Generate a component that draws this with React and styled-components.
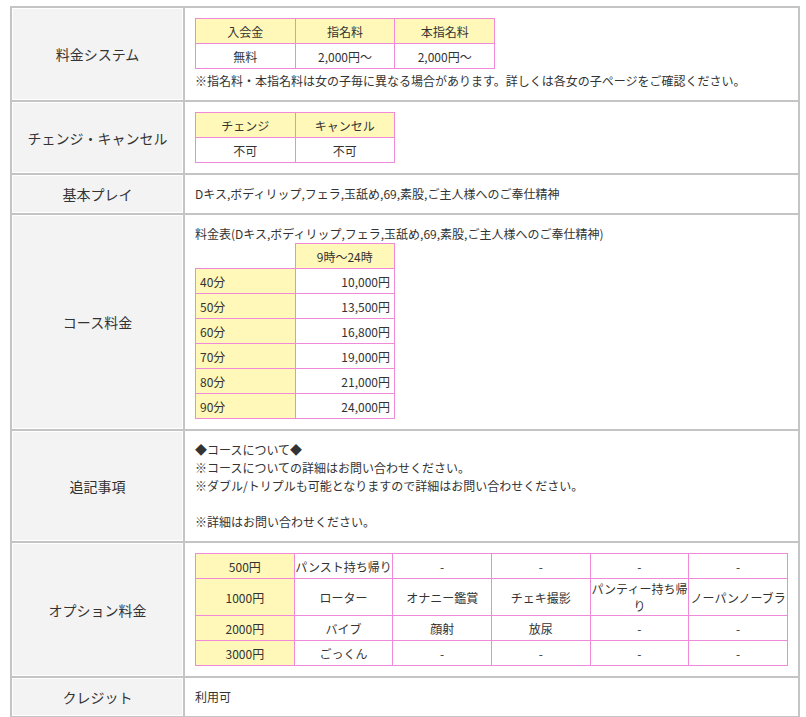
import React from 'react';
import styled, { createGlobalStyle } from 'styled-components';

const Global = createGlobalStyle`
  body { margin: 0; background: #fff; font-family: "Noto Sans CJK JP", "Liberation Sans", sans-serif; color: #333; }
`;

const Wrap = styled.div`
  padding: 6px 6px 0 10px;
`;

const Outer = styled.table`
  width: 790px;
  border-collapse: collapse;
  border: 2px solid #c4c4c4;
`;

const Label = styled.th`
  width: 174px;
  background: #f3f3f3;
  border: 2px solid #c4c4c4;
  box-shadow: inset 0 0 0 1px #fff;
  font-weight: normal;
  font-size: 14px;
  color: #333;
  text-align: center;
`;

const Content = styled.td`
  border: 2px solid #c4c4c4;
  padding: ${p => p.$pad || '10px 10px'};
  font-size: 12px;
  line-height: 18px;
  vertical-align: middle;
`;

const Inner = styled.table`
  border-collapse: collapse;
  width: ${p => p.$w}px;
  table-layout: fixed;
`;

const Cell = styled.td`
  border: 1px solid #f08ad8;
  background: ${p => (p.$head ? '#fff8b8' : '#fff')};
  text-align: ${p => p.$align || 'center'};
  height: ${p => p.$h || 24}px;
  padding: ${p => (p.$tight ? '0' : '0 4px')};
  font-size: 12px;
  line-height: 17px;
`;

const Note = styled.div`
  margin-top: 3px;
`;

const Line = styled.div`
  min-height: 18px;
`;

const courses = [['40分', '10,000円'], ['50分', '13,500円'], ['60分', '16,800円'], ['70分', '19,000円'], ['80分', '21,000円'], ['90分', '24,000円']];

const options = [
  ['500円', 'パンスト持ち帰り', '-', '-', '-', '-'],
  ['1000円', 'ローター', 'オナニー鑑賞', 'チェキ撮影', 'パンティー持ち帰り', 'ノーパンノーブラ'],
  ['2000円', 'バイブ', '顔射', '放尿', '-', '-'],
  ['3000円', 'ごっくん', '-', '-', '-', '-'],
];

export default function App() {
  return (
    <Wrap>
      <Global />
      <Outer>
        <tbody>
          <tr>
            <Label>料金システム</Label>
            <Content>
              <Inner $w={300}>
                <tbody>
                  <tr><Cell $head>入会金</Cell><Cell $head>指名料</Cell><Cell $head>本指名料</Cell></tr>
                  <tr><Cell>無料</Cell><Cell>2,000円～</Cell><Cell>2,000円～</Cell></tr>
                </tbody>
              </Inner>
              <Note>※指名料・本指名料は女の子毎に異なる場合があります。詳しくは各女の子ページをご確認ください。</Note>
            </Content>
          </tr>
          <tr>
            <Label>チェンジ・キャンセル</Label>
            <Content>
              <Inner $w={200}>
                <tbody>
                  <tr><Cell $head>チェンジ</Cell><Cell $head>キャンセル</Cell></tr>
                  <tr><Cell>不可</Cell><Cell>不可</Cell></tr>
                </tbody>
              </Inner>
            </Content>
          </tr>
          <tr>
            <Label>基本プレイ</Label>
            <Content $pad="10px">Dキス,ボディリップ,フェラ,玉舐め,69,素股,ご主人様へのご奉仕精神</Content>
          </tr>
          <tr>
            <Label>コース料金</Label>
            <Content>
              <Line>料金表(Dキス,ボディリップ,フェラ,玉舐め,69,素股,ご主人様へのご奉仕精神)</Line>
              <Inner $w={200}>
                <tbody>
                  <tr><td /><Cell $head>9時～24時</Cell></tr>
                  {courses.map(([t, p]) => (
                    <tr key={t}><Cell $head $align="left">{t}</Cell><Cell $align="right">{p}</Cell></tr>
                  ))}
                </tbody>
              </Inner>
            </Content>
          </tr>
          <tr>
            <Label>追記事項</Label>
            <Content>
              <Line>◆コースについて◆</Line>
              <Line>※コースについての詳細はお問い合わせください。</Line>
              <Line>※ダブル/トリプルも可能となりますので詳細はお問い合わせください。</Line>
              <Line />
              <Line>※詳細はお問い合わせください。</Line>
            </Content>
          </tr>
          <tr>
            <Label>オプション料金</Label>
            <Content>
              <Inner $w={593}>
                <tbody>
                  {options.map((r, i) => (
                    <tr key={i}>
                      {r.map((c, j) => (
                        <Cell key={j} $head={j === 0} $tight $h={i === 1 ? 36 : 24}>{c}</Cell>
                      ))}
                    </tr>
                  ))}
                </tbody>
              </Inner>
            </Content>
          </tr>
          <tr>
            <Label>クレジット</Label>
            <Content $pad="10px">利用可</Content>
          </tr>
        </tbody>
      </Outer>
    </Wrap>
  );
}
